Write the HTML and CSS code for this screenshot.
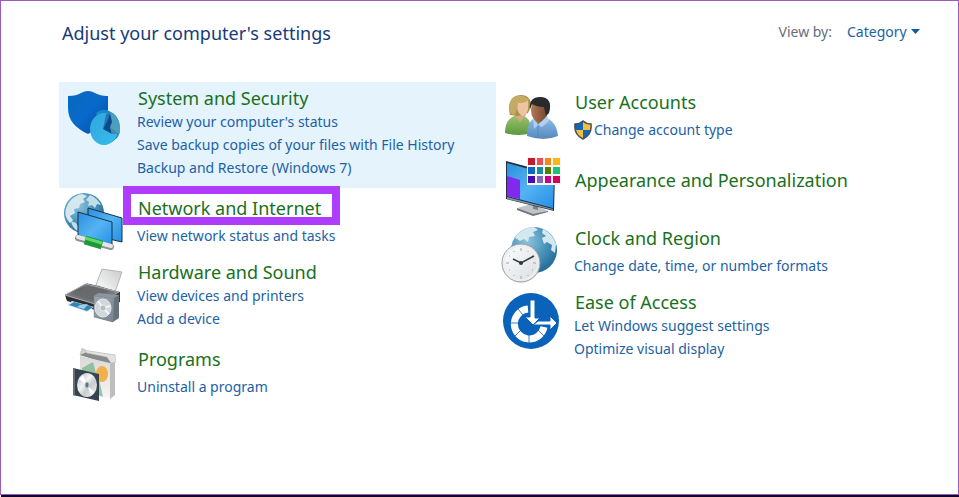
FILE: index.html
```
<!DOCTYPE html>
<html lang="en">
<head>
<meta charset="UTF-8" />
<meta name="viewport" content="width=device-width, initial-scale=1" />
<title>Control Panel</title>
<link rel="stylesheet" href="styles.css">
</head>
<body>
<main class="panel">
  <header class="panel-header">
    <h1>Adjust your computer's settings</h1>
    <div class="view-by">
      <label for="viewBy">View by:</label>
      <select id="viewBy">
        <option>Category</option>
        <option>Large icons</option>
        <option>Small icons</option>
      </select>
      <svg class="caret" viewBox="0 0 9 5" aria-hidden="true"><path d="M0 0h9L4.500 5z" fill="#14599c"/></svg>
    </div>
  </header>
  <div class="columns">
    <div class="column">
      <!-- System and Security -->
      <section class="category active">
        <svg class="icon" viewBox="0 0 64 64" aria-hidden="true">
          <defs>
            <linearGradient id="shieldBlue" x1="0" y1="0" x2="1" y2="1"><stop offset="0" stop-color="#0869bd"/><stop offset=".5" stop-color="#0869cc"/><stop offset="1" stop-color="#07489a"/></linearGradient>
            <linearGradient id="pieBlue" x1="0" y1="0" x2="1" y2="1"><stop offset="0" stop-color="#2fa5df"/><stop offset="1" stop-color="#38bdea"/></linearGradient>
          </defs>
          <path d="M4 10c6 0 10-1 13-3q7-4 14 0c4 2 7 3 13 3v13c0 12-9 19-20 25C11 42 4 34 4 22z" fill="url(#shieldBlue)"/>
          <path d="M32 27q7-6 15-1c7 4 9 10 9 17 0 6-3 10-8 13l-7 3z" fill="#168bc5"/>
          <ellipse cx="40" cy="43" rx="14" ry="16" fill="url(#pieBlue)"/>
          <path d="M46 26c6 3 10 9 10 17 0 2 0 4-1 5l-9-6-3-6z" fill="#4c9fbe"/>
          <path d="M39 43l7-16 2 9-2 5 2 7z" fill="#0b4a8c"/>
          <path d="M39 43l3-15 4-1-3 9z" fill="#2677b0"/>
          <path d="M46 41l9 7-7 0z" fill="#4888a8"/>
        </svg>
        <div class="info">
          <h2><a href="#">System and Security</a></h2>
          <ul>
            <li><a href="#">Review your computer's status</a></li>
            <li><a href="#">Save backup copies of your files with File History</a></li>
            <li><a href="#">Backup and Restore (Windows 7)</a></li>
          </ul>
        </div>
      </section>
      <!-- Network and Internet -->
      <section class="category single">
        <svg class="icon" viewBox="0 0 64 64" aria-hidden="true">
          <defs>
            <radialGradient id="globe" cx=".35" cy=".3" r=".75"><stop offset="0" stop-color="#8fc3dc"/><stop offset=".6" stop-color="#4590b9"/><stop offset="1" stop-color="#246b98"/></radialGradient>
            <linearGradient id="screen" x1="0" y1="0" x2="1" y2="1"><stop offset="0" stop-color="#2b8fdc"/><stop offset=".5" stop-color="#54b3f3"/><stop offset="1" stop-color="#2490e5"/></linearGradient>
          </defs>
          <circle cx="20" cy="21" r="20" fill="url(#globe)"/>
          <path d="M3 14C6 7 12 3 18 2l5 2-4 3 2 3-5 2-1 4-5 1 1 4-5 3 3 4-3 3C1 26 0 20 3 14z" fill="#d4e7ee"/>
          <path d="M26 3c5 2 9 6 11 10l-4-1-2 4-3-3-4 1 1-4-3-2zM7 29l5 2 3 5-1 3c-4-2-6-5-7-10z" fill="#c4dee8"/>
          <path d="M24 16l34 10v24L24 42z" fill="url(#screen)" stroke="#17324b"/>
          <path d="M14 20l34 10v24L14 43z" fill="url(#screen)" stroke="#17324b"/>
          <path d="M14 46l33 9" stroke="#8d9494" stroke-width="6" stroke-linecap="round"/>
          <path d="M14 45l33 9" stroke="#e5e7e5" stroke-width="4" stroke-linecap="round"/>
          <path d="M21 48l17 5" stroke="#1d9a37" stroke-width="9"/>
          <path d="M21 46l17 5" stroke="#62d573" stroke-width="3"/>
        </svg>
        <div class="info">
          <h2 class="marked"><a href="#">Network and Internet</a></h2>
          <ul>
            <li><a href="#">View network status and tasks</a></li>
          </ul>
        </div>
      </section>
      <!-- Hardware and Sound -->
      <section class="category">
        <svg class="icon" viewBox="0 0 64 64" aria-hidden="true">
          <defs>
            <linearGradient id="metal" x1="0" y1="0" x2="1" y2="1"><stop offset="0" stop-color="#9ca6b0"/><stop offset="1" stop-color="#77838f"/></linearGradient>
            <linearGradient id="printerTop" x1="0" y1="1" x2="1" y2="0"><stop offset="0" stop-color="#8b8e90"/><stop offset=".5" stop-color="#606264"/><stop offset="1" stop-color="#989b9d"/></linearGradient>
            <linearGradient id="paper" x1="0" y1="1" x2="1" y2="0"><stop offset="0" stop-color="#fff"/><stop offset="1" stop-color="#c8c9ca"/></linearGradient>
          </defs>
          <path d="M38 9l20 3-7 20-19-7z" fill="url(#paper)" stroke="#b5b7b9"/>
          <path d="M1 35l20-11q2-1 5 0l30 8v10l-25 8L3 41z" fill="#36393b"/>
          <path d="M1 35l21-11 33 8-24 12z" fill="url(#printerTop)" stroke="#a9adb0"/>
          <path d="M9 34l16-8 21 5-17 9z" fill="#686a6c"/>
          <path d="M2 37l29 8v4L3 40z" fill="#272d31"/>
          <path d="M8 41l22 6-7 5-20-7z" fill="#d8e8ef"/>
          <path d="M10 42l19 5-6 4-18-6z" fill="#3284b8"/>
          <path d="M16 45l8-1-4 5-7-2z" fill="#a4cfe0"/>
          <path d="M30 36l4-3 21 2v23l-6 4-19-5z" fill="#66717e"/>
          <path d="M30 36l20 2-1 24-19-5z" fill="url(#metal)" stroke="#78828c" stroke-width=".5"/>
          <path d="M30 36l4-3 21 2-5 3z" fill="#8b959d"/>
          <ellipse cx="39" cy="48" rx="8" ry="9" fill="#d0d6da" stroke="#e4e9ec"/>
          <path d="M39 48l-5-7M39 48l6 6M39 48l7-2" stroke="#f4f5f6" stroke-width="2"/>
          <circle cx="39" cy="48" r="3" fill="#b4bcc3" stroke="#fff" stroke-width=".6"/>
        </svg>
        <div class="info">
          <h2><a href="#">Hardware and Sound</a></h2>
          <ul>
            <li><a href="#">View devices and printers</a></li>
            <li><a href="#">Add a device</a></li>
          </ul>
        </div>
      </section>
      <!-- Programs -->
      <section class="category single">
        <svg class="icon" viewBox="0 0 64 64" aria-hidden="true">
          <defs>
            <linearGradient id="disc" x1="0" y1="0" x2="1" y2="1"><stop offset="0" stop-color="#a9b4ba"/><stop offset=".4" stop-color="#f4f4f4"/><stop offset=".6" stop-color="#c8cdd0"/><stop offset="1" stop-color="#f6f7f7"/></linearGradient>
            <linearGradient id="boxSide" x1="0" y1="0" x2="0" y2="1"><stop offset="0" stop-color="#dad9d7"/><stop offset="1" stop-color="#f7f6f4"/></linearGradient>
          </defs>
          <path d="M16 12l2-7 5 3 28 4-3 8z" fill="#d3d2d1" stroke="#b5b5b5" stroke-width=".6"/>
          <path d="M16 12l7-3 24 6 4 5-4 2z" fill="#8a8a8a"/>
          <path d="M16 13l30 7v36l-30-8z" fill="url(#boxSide)"/>
          <path d="M46 20l5-2v34l-5 4z" fill="#bfbebc"/>
          <path d="M20 7l5 1 26 4 1 7-5 1-4-6-20-4z" fill="#e3e2e1" stroke="#bfbfbf" stroke-width=".5"/>
          <path d="M18 25l11-6 3 11-14-2z" fill="#91bfa0"/>
          <path d="M35 36l4 18-5-2z" fill="#9ac2aa"/>
          <ellipse cx="38" cy="31" rx="6" ry="8" fill="#f2b04b"/>
          <path d="M9 25l26 6v27L9 52z" fill="#34434d"/>
          <path d="M9 25l2 1v27l-2-1z" fill="#647079"/>
          <ellipse cx="23" cy="42" rx="10" ry="12" fill="url(#disc)"/>
          <path d="M23 42l-8-6 4-4zM23 42l7 7-3 3z" fill="#fff"/>
          <ellipse cx="23" cy="42" rx="2" ry="3" fill="#61737c" stroke="#b9c2c6"/>
        </svg>
        <div class="info">
          <h2><a href="#">Programs</a></h2>
          <ul>
            <li><a href="#">Uninstall a program</a></li>
          </ul>
        </div>
      </section>
    </div>
    <div class="column">
      <!-- User Accounts -->
      <section class="category single">
        <svg class="icon" viewBox="0 0 64 64" aria-hidden="true">
          <defs>
            <linearGradient id="greenTop" x1="0" y1="0" x2="0" y2="1"><stop offset="0" stop-color="#9bc46a"/><stop offset="1" stop-color="#5c9741"/></linearGradient>
            <linearGradient id="blueTop" x1="0" y1="0" x2="0" y2="1"><stop offset="0" stop-color="#8ebce5"/><stop offset="1" stop-color="#5588bf"/></linearGradient>
            <linearGradient id="manFace" x1="0" y1="0" x2="1" y2="0"><stop offset="0" stop-color="#b17a58"/><stop offset="1" stop-color="#76462d"/></linearGradient>
          </defs>
          <path d="M4 47c0-9 3-14 9-17h10c6 3 7 8 7 17q-12 4-26 0z" fill="url(#greenTop)"/>
          <path d="M13 28l6 8 6-7v-5H14z" fill="#d7a881"/>
          <path d="M9 29c-2-8-1-16 6-19 8-3 14 1 15 7 1 5-2 7-3 10l-10 3z" fill="#ad914b"/>
          <path d="M17 16c4 1 8 0 10-3 1 8 0 16-5 17-5-2-7-7-5-14z" fill="#edc49f"/>
          <path d="M9 27c-2-8 0-15 6-17 6-1 10 0 13 4-4 3-8 3-11 3-1 6-1 9-4 12z" fill="#c5aa63"/>
          <path d="M26 50c0-9 2-15 8-18h11c8 3 11 9 12 18q-14 6-31 0z" fill="url(#blueTop)"/>
          <path d="M32 29l5 9 9-7v-6H34z" fill="#a06b4b"/>
          <ellipse cx="38" cy="24" rx="8" ry="12" fill="url(#manFace)"/>
          <path d="M29 23c-1-8 3-12 10-12 9 0 12 6 9 16l-3 3-2-9c-5 0-9-1-12-3z" fill="#292a2d"/>
          <path d="M32 32l5 7-4 4zM46 30l2 5-7 6-4-2z" fill="#b0d1ee"/>
          <path d="M37 39v13" stroke="#4f84b9" stroke-width=".7"/>
        </svg>
        <div class="info">
          <h2><a href="#">User Accounts</a></h2>
          <ul>
            <li>
              <a class="admin" href="#">
                <svg viewBox="0 0 18 20" aria-hidden="true">
                  <path d="M9 1c2 2 5 3 8 3 1 8-2 12-8 15C3 16 0 12 1 4c3 0 6-1 8-3z" fill="#f6be3c"/>
                  <path d="M9 1v9H1V4c3 0 6-1 8-3zM9 10h8c-1 4-4 7-8 9z" fill="#1765b4"/>
                  <path d="M9 1c2 2 5 3 8 3 1 8-2 12-8 15C3 16 0 12 1 4c3 0 6-1 8-3z" fill="none" stroke="#44535c" stroke-width="1.500"/>
                </svg>Change account type</a>
            </li>
          </ul>
        </div>
      </section>
      <!-- Appearance and Personalization -->
      <section class="category title-only">
        <svg class="icon" viewBox="0 0 64 64" aria-hidden="true">
          <path d="M16 54l15-4 16 7-15 4z" fill="#bec3c8"/>
          <path d="M16 54l16 6 15-3v1l-15 4-16-6z" fill="#6f7578"/>
          <path d="M32 48l5 1v7l-5-1z" fill="#7c848a"/>
          <path d="M5 7l49 13-1 37L5 45z" fill="#252f40"/>
          <path d="M6 9l47 13-1 32L6 42z" fill="url(#screen)"/>
          <path d="M6 22l13 4v19L6 42z" fill="#8129ef"/>
          <path d="M6 43l46 12v1L6 45z" fill="#7f939d"/>
          <path d="M26 3h34v28H26z" fill="#f8f7f5"/>
          <path d="M27 4h7v7h-7z" fill="#c4192e"/><path d="M36 4h6v7h-6z" fill="#ef4c53"/><path d="M44 4h6v7h-6z" fill="#f28a13"/><path d="M52 4h7v7h-7z" fill="#fbb713"/>
          <path d="M27 13h7v7h-7z" fill="#0b67c0"/><path d="M36 13h6v7h-6z" fill="#178ca1"/><path d="M44 13h6v7h-6z" fill="#538000"/><path d="M52 13h7v7h-7z" fill="#1cc376"/>
          <path d="M27 22h7v7h-7z" fill="#480aaa"/><path d="M36 22h6v7h-6z" fill="#8568b7"/><path d="M44 22h6v7h-6z" fill="#c50086"/><path d="M52 22h7v7h-7z" fill="#d4005a"/>
        </svg>
        <div class="info">
          <h2><a href="#">Appearance and Personalization</a></h2>
        </div>
      </section>
      <!-- Clock and Region -->
      <section class="category single">
        <svg class="icon" viewBox="0 0 64 64" aria-hidden="true">
          <defs>
            <linearGradient id="clockFace" x1="0" y1="0" x2="1" y2="1"><stop offset="0" stop-color="#fff"/><stop offset="1" stop-color="#d8dce1"/></linearGradient>
          </defs>
          <circle cx="33" cy="28" r="23" fill="url(#globe)"/>
          <path d="M14 16c4-7 11-11 19-11l4 3-5 2 2 4-6 1-1 5-4-3-4 2-3-2z" fill="#d3e9ef"/>
          <path d="M42 7c6 3 11 8 13 15l-1 9-4-3 1-5-5-3-3 2-2-6 4-2-4-3z" fill="#d3e9ef"/>
          <circle cx="20" cy="41" r="19" fill="url(#clockFace)" stroke="#969ca1" stroke-width="1"/>
          <circle cx="20" cy="41" r="17" fill="none" stroke="#eceeef" stroke-width="2"/>
          <path d="M20 26v3M20 54v3M5 41h3M32 41h3" stroke="#a4a3a0"/>
          <path d="M13 29v1M27 29v1M13 53v1M27 53v1M8 34h1M31 34h1M8 48h1M31 48h1" stroke="#a4a3a0"/>
          <path d="M12 37l8 4 13-7" fill="none" stroke="#363b40" stroke-width="1.500"/>
          <circle cx="20" cy="41" r="2" fill="#30373d"/>
        </svg>
        <div class="info">
          <h2><a href="#">Clock and Region</a></h2>
          <ul>
            <li><a href="#">Change date, time, or number formats</a></li>
          </ul>
        </div>
      </section>
      <!-- Ease of Access -->
      <section class="category">
        <svg class="icon" viewBox="0 0 64 64" aria-hidden="true">
          <circle cx="30" cy="31" r="28" fill="#0b62bb"/>
          <path d="M27 19A15 15 0 1 0 43 37" fill="none" stroke="#fff" stroke-width="7"/>
          <path d="M17 19l5 6M9 33h9M14 46l6-6M28 53v-9M43 46l-6-6" stroke="#0b62bb" stroke-width=".8"/>
          <path d="M29 10h5v18h5l-7 7-8-8h5z" fill="#fff" stroke="#0b62bb"/>
          <path d="M32 35l5-4h12v-5l7 7-7 7v-5z" fill="#fff" stroke="#0b62bb"/>
        </svg>
        <div class="info">
          <h2><a href="#">Ease of Access</a></h2>
          <ul>
            <li><a href="#">Let Windows suggest settings</a></li>
            <li><a href="#">Optimize visual display</a></li>
          </ul>
        </div>
      </section>
    </div>
  </div>
</main>
<div class="taskbar-edge"></div>
</body>
</html>
```
FILE: styles.css
```
:root {
  --frame: #9a5cb8;
  --mark: #ae3dff;
  --title: #19701d;
  --link: #1c62a5;
  --heading: #173a7a;
  --hover-bg: #e5f3fd;
}
* { box-sizing: border-box; }
body {
  margin: 0;
  min-height: 100vh;
  display: flex;
  flex-direction: column;
  font-family: "Noto Sans", "Open Sans", sans-serif;
  font-size: 14px;
  background: #fff;
}
a {
  color: inherit;
  text-decoration: none;
}
.info a:hover { text-decoration: underline; }
.panel {
  flex: 1;
  border: 1px solid var(--frame);
  padding: 16px 25px 16px 58px;
}
.panel-header {
  display: flex;
  justify-content: space-between;
  height: 32px;
  margin-bottom: 33px;
  padding: 0 13px 0 3px;
}
h1,
.info h2 {
  margin: 0;
  font-size: 18px;
  font-weight: 400;
}
h1 {
  line-height: 32px;
  color: var(--heading);
}
.view-by {
  display: flex;
  align-items: center;
  height: 28px;
  color: #666e7b;
}
.view-by select {
  appearance: none;
  width: 64px;
  margin-left: 15px;
  padding: 0;
  border: none;
  background: none;
  font: inherit;
  color: var(--link);
  cursor: pointer;
}
.caret {
  width: 9px;
  height: 5px;
  pointer-events: none;
}
.columns {
  display: grid;
  grid-template-columns: 1fr 1fr;
}
.category {
  display: flex;
  padding: 4px 0 9px 5px;
}
.category.active { background: var(--hover-bg); }
.icon {
  flex: none;
  width: 64px;
  height: 64px;
  margin-right: 9px;
}
.info h2 {
  position: relative;
  width: fit-content;
  padding-left: 1px;
  line-height: 24px;
  color: var(--title);
}
.info ul {
  margin: 0;
  padding: 0;
  list-style: none;
  line-height: 23px;
  color: var(--link);
}
.single,
.title-only {
  padding-bottom: 0;
}
.single .info { padding-top: 4px; }
.single ul { padding-top: 4px; }
.title-only .info { padding-top: 14px; }
.marked::after {
  content: "";
  position: absolute;
  inset: -10px -19px -5px -14px;
  border: 8px solid var(--mark);
  pointer-events: none;
}
.admin {
  display: flex;
  align-items: center;
  gap: 2px;
}
.admin svg {
  width: 18px;
  height: 20px;
}
.taskbar-edge {
  height: 2px;
  margin-left: 1px;
  background: #10052b;
}
```
